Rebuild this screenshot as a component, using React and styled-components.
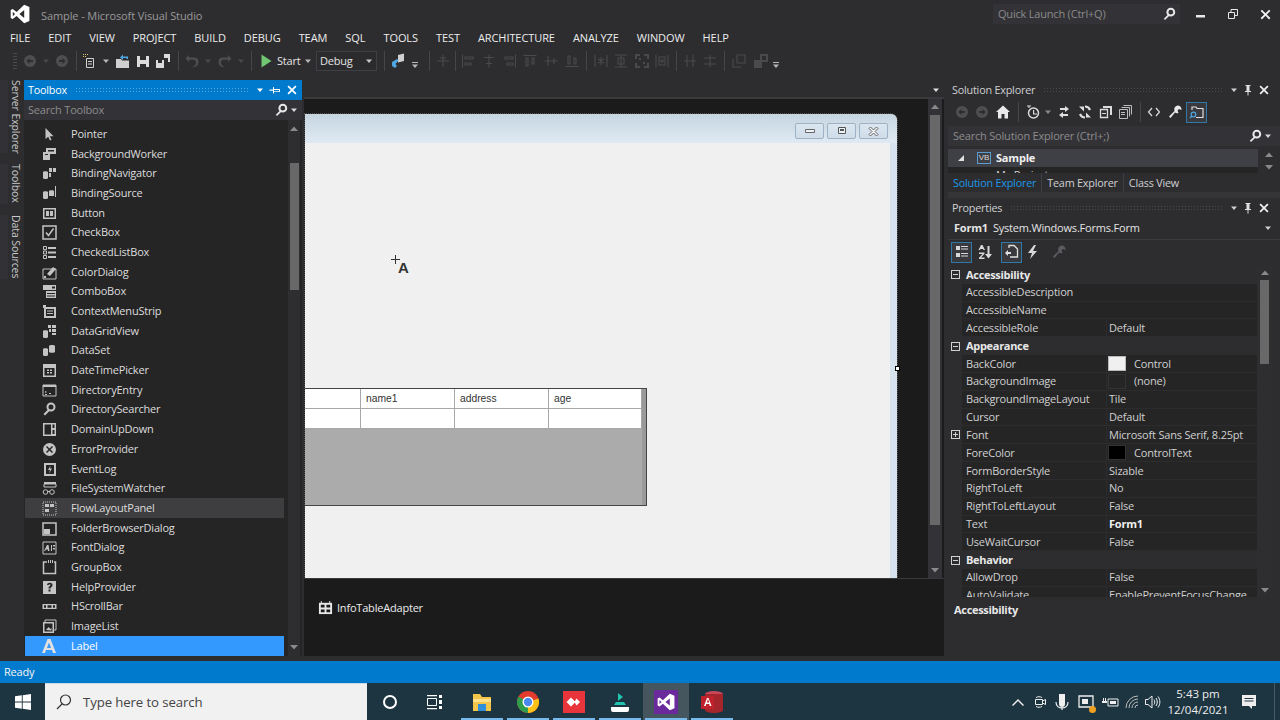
import React from 'react';
import styled, { createGlobalStyle } from 'styled-components';

const Global = createGlobalStyle`
  html, body { margin: 0; padding: 0; background: #2d2d30; }
  * { box-sizing: border-box; }
`;

const FONT = `"Open Sans", "Noto Sans", "Liberation Sans", sans-serif`;

const Page = styled.div`
  width: 1280px; height: 720px; overflow: hidden; display: flex; flex-direction: column;
  background: #2d2d30; color: #d8d8d8; font: 11px/16px ${FONT}; letter-spacing: -0.2px;
`;
const Svg = styled.svg`
  display: block; flex: none; color: ${p => p.$c || 'inherit'};
`;
const Ico = ({ s = 16, c, v = 16, children }) => (
  <Svg width={s} height={s} viewBox={`0 0 ${v} ${v}`} $c={c} fill="currentColor" stroke="none">{children}</Svg>
);
const Hole = p => <path fill="#252526" {...p} />;
const VSLogo = ({ s = 20, c = '#fff' }) => (
  <Ico s={s} v={20} c={c}><path fillRule="evenodd" d="M14.2.8 19.4 3v14l-5.2 2.2-7.6-7.3-3.9 3-2-1V6.1l2-1 3.9 3zM14.2 6 9.4 10l4.8 4zM2.8 7.8v4.4L5 10z" /></Ico>
);
const Caret = ({ c = '#d0d0d0', s = 8 }) => (
  <Ico s={s} v={8} c={c}><path d="M1 2.5h6L4 6z" /></Ico>
);
const Glass = ({ c = '#e8e8e8', s = 14 }) => (
  <Ico s={s} v={14} c={c}><circle cx="8.8" cy="5.2" r="3.4" fill="none" stroke="currentColor" strokeWidth="2" /><path d="M6.3 7.2 1.8 11.7l1.2 1.2L7.6 8.5z" /></Ico>
);
const Pin = () => (
  <Ico s={12} v={12} c="#e0e0e0"><path d="M3.500 1h5v1h-1v5h1.500v1H6.500v3.500h-1V8H3V7h1.500V2h-1z" /></Ico>
);
const PinSide = () => (
  <Ico s={12} v={12} c="#fff"><path d="M0.500 5.500H4V3h1v2h6v3H5v1.500H4V6.700H0.500zM5 6v1.200h5V6z" fillRule="evenodd" /></Ico>
);
const Close = ({ c = '#f0f0f0', s = 12 }) => (
  <Ico s={s} v={12} c={c}><path d="M1.500 2.700l1.200-1.200L6 4.800l3.300-3.300 1.200 1.200L7.200 6l3.300 3.300-1.200 1.200L6 7.200l-3.300 3.300-1.200-1.200L4.800 6z" /></Ico>
);

/* ---------- top chrome ---------- */
const TitleRow = styled.header`
  height: 28px; flex: none; display: flex; align-items: center; padding-left: 10px; color: #999;
`;
const TitleText = styled.span` margin-left: 11px; font-size: 11px; letter-spacing: -0.1px; flex: 1; padding-top: 4px; `;
const QuickLaunch = styled.div`
  width: 187px; height: 20px; background: #333337; color: #8a8a8a; padding: 0 4px 0 5px;
  display: flex; justify-content: space-between; align-items: center;
`;
const WinButtons = styled.div`
  display: flex; align-items: center; width: 100px; padding-left: 15px; gap: 20px;
`;
const MenuBar = styled.nav`
  height: 20px; flex: none; display: flex; align-items: center; gap: 18px; padding-left: 10px;
  color: #ececec; font-size: 11px; letter-spacing: -0.08px;
`;
const ToolStrip = styled.div`
  height: 26px; flex: none; display: flex; align-items: center; padding-left: 10px; color: #d8d8d8;
`;
const Tool = styled.span`
  width: ${p => p.$w}px; height: 20px; flex: none; display: flex; align-items: center; justify-content: center;
  ${p => p.$low ? 'padding-top: 8px;' : ''}
`;
const ToolSep = styled.span`
  width: ${p => p.$w || 8}px; height: 20px; flex: none; display: flex; justify-content: center;
  &::before { content: ''; width: 1px; background: #46464a; }
`;
const ToolText = styled.span` width: ${p => p.$w}px; flex: none; color: #e4e4e4; padding-left: 1px; `;
const Combo = styled.div`
  width: 61px; height: 20px; flex: none; border: 1px solid #3f3f46; display: flex; align-items: center;
  justify-content: space-between; padding: 0 3px 0 3px; color: #e4e4e4; background: #2b2b2e;
`;
const Grip = styled.span`
  width: 4px; height: 18px; margin: 0 3px;
  background-image: radial-gradient(#4a4a4d 0.7px, transparent 0.8px); background-size: 2px 3px;
`;

/* toolbar glyphs */
const dim = '#4e4e51';
const circleArrow = flip => (
  <Ico c={dim}><circle cx="8" cy="8" r="6" /><path fill="#2d2d30" d={flip ? 'M5 7h3.500V5L11.500 8l-3 3V9H5z' : 'M11 7H7.500V5L4.500 8l3 3V9H11z'} /></Ico>
);
const Ln = ({ d, c = '#4a4a4d' }) => (
  <Ico c={c}><path d={d} fill="none" stroke="currentColor" strokeWidth="1.100" /></Ico>
);
const AnyIco = {
  newProj: <Ico c="#d0d0d0"><path d="M4.500 5.500h7v9h-7z" fill="none" stroke="currentColor" strokeWidth="1" /><path d="M6 8h4v1H6zM6 10.500h4v1H6z" /><path d="M1 1h1v1H1zM3 1h1v1H3zM1 3h1v1H1zM3 3h1v1H3zM5 1h1v1H5z" fill="#d6c26a" /></Ico>,
  open: <Ico c="#d0d0d0"><path d="M1 6h5l1 1.500h7V15H1z" /><path d="M5 4.500 8 1.500v2h5v2.500h-1.500V5H8v2z" fill="#4fa6e0" /></Ico>,
  save: <Ico c="#dcdcdc"><path fillRule="evenodd" d="M2 3h12v11H2zM5 3v4h6V3zM5 11h6v3H5z" /></Ico>,
  saveAll: <Ico c="#dcdcdc"><path fillRule="evenodd" d="M7 1h8v8h-2V5H9V1zM1 7h8v8H1zM3 7v3h4V7z" /></Ico>,
  undo: <Ico c={dim}><path d="M5 2 1.500 5.500 5 9V6.700h4.500c2 0 2.500 1.500 2.500 3 0 2-1.500 3-3.500 4.300 4 0 6-2 6-5 0-3.500-2-4.500-4.500-4.500H5z" /></Ico>,
  redo: <Ico c={dim}><path d="M11 2l3.500 3.500L11 9V6.700H6.500c-2 0-2.500 1.500-2.500 3 0 2 1.500 3 3.500 4.300-4 0-6-2-6-5 0-3.500 2-4.500 4.500-4.500H11z" /></Ico>,
  play: <Ico s={16} c="#71c671"><path d="M3.500 1.500 13.500 8l-10 6.500z" /></Ico>,
  attach: <Ico c="#d0d0d0"><path d="M8 2l6-1.500V8L8 9.500z" /><path d="M2 9l5-3 1.500 1.500-3 3.500L7 13l-2 2-3-2z" fill="#4fa6e0" /></Ico>,
  low: <Ico s={8} v={8} c="#b8b8b8"><path d="M1 1h6v1H1zM1 3.500h6L4 7z" /></Ico>,
  plus: <Ln d="M8 2v12M2 8h12M5 5h6" />,
  a1: <Ln d="M2.500 1.500v13M5 4h8v2H5zM5 10h6v2H5z" />,
  a2: <Ln d="M8 1.500v13M3 4.500h10M5 10.500h6" />,
  a3: <Ln d="M13.500 1.500v13M3 4h8v2H3zM5 10h6v2H5z" />,
  a4: <Ln d="M1.500 2.500h13M4 5v8h2V5zM10 5v6h2V5z" />,
  a5: <Ln d="M1.500 8h13M5 3v10M11 5v6" />,
  a6: <Ln d="M1.500 13.500h13M4 3v8h2V3zM10 5v6h2V5z" />,
  b1: <Ln d="M2 2v12M14 2v12M8 4v8M5 6l6 4M11 6l-6 4" />,
  b2: <Ln d="M2 2h12M2 14h12M8 2v12M5 5h6v6H5z" />,
  b3: <Ico c="#4a4a4d"><path d="M1 1h5v2H3v3H1zM10 1h5v5h-2V3h-3zM1 10h2v3h3v2H1zM13 10h2v5h-5v-2h3zM5 5l2 0v2H5zM9 9h2v2H9z" /></Ico>,
  b4: <Ln d="M2 2v12M14 2v12M5 4h6v8H5zM7 7h2v2H7z" />,
  c1: <Ln d="M5 2v12M11 2v12M2 8h12" />,
  c2: <Ln d="M2 5h12M2 11h12M8 2v12" />,
  d1: <Ln d="M6 2h8v8H6zM2 6v8h8" />,
  d2: <Ico c="#4a4a4d"><path d="M7 1h8v8H7zM1 7h8v8H1z" /><path fill="#2d2d30" d="M9 3h4v4H9z" /></Ico>,
  tDim: <Caret c="#4a4a4d" />,
  t: <Caret c="#b8b8b8" />,
};
const strip = [
  ['g'], [20, circleArrow(false)], [12, AnyIco.tDim], [20, circleArrow(true)], ['s', 8],
  [20, AnyIco.newProj], [12, AnyIco.t], [22, AnyIco.open], [18, AnyIco.save], [22, AnyIco.saveAll], ['s', 8],
  [20, AnyIco.undo], [12, AnyIco.tDim], [22, AnyIco.redo], [10, AnyIco.tDim], ['s', 10],
  [20, AnyIco.play], ['x', 24, 'Start'], [16, AnyIco.t], ['c'], ['s', 14],
  [14, AnyIco.attach], [20, AnyIco.low, true], ['s', 8], [20, AnyIco.plus], ['s', 4],
  [21, AnyIco.a1], [22, AnyIco.a2], [20, AnyIco.a3], [20, AnyIco.a4], [22, AnyIco.a5], [20, AnyIco.a6], ['s', 8],
  [21, AnyIco.b1], [20, AnyIco.b2], [21, AnyIco.b3], [20, AnyIco.b4], ['s', 8],
  [20, AnyIco.c1], [20, AnyIco.c2], ['s', 8],
  [22, AnyIco.d1], [21, AnyIco.d2], [10, AnyIco.low, true],
];

/* ---------- main ---------- */
const Main = styled.main`
  height: 587px; flex: none; display: flex; padding: 6px 0 5px;
`;
const SideTabs = styled.aside`
  width: 24px; flex: none; display: flex; flex-direction: column; gap: 11px;
`;
const SideTab = styled.div`
  writing-mode: vertical-rl; height: ${p => p.$h}px; display: flex; align-items: center; font-size: 10.5px;
  letter-spacing: -0.1px; line-height: 14px; width: 23px; color: #c8c8c8; white-space: nowrap;
  border-left: 8px solid #323236;
`;
const ToolboxPane = styled.section`
  width: 278px; flex: none; display: flex; flex-direction: column; background: #252526; margin-right: 2px;
`;
const PaneHead = styled.div`
  height: 20px; flex: none; display: flex; align-items: center; gap: 6px; padding: 0 ${p => p.$r}px 1px ${p => p.$l}px;
  font-size: 10.8px; letter-spacing: -0.2px;
  background: ${p => p.$on ? '#007acc' : 'transparent'}; color: ${p => p.$on ? '#fff' : '#d0d0d0'};
`;
const Dots = styled.span`
  flex: 1; height: 5px; margin: 0 2px;
  background-image: radial-gradient(${p => p.$on ? '#59a8dc' : '#4a4a4d'} 0.6px, transparent 0.7px);
  background-size: 3px 3px;
`;
const HeadBtns = styled.span` display: flex; align-items: center; gap: ${p => p.$g}px; `;
const SearchBox = styled.div`
  height: 20px; flex: none; background: #333337; color: #8c8c8c; display: flex; align-items: center;
  justify-content: space-between; padding: 0 ${p => p.$r || 4}px 1px ${p => p.$l || 4}px;
`;
const SearchEnd = styled.span` display: flex; align-items: center; gap: 2px; `;
const ToolList = styled.div`
  flex: 1; min-height: 0; display: flex;
`;
const ToolItems = styled.ul`
  flex: none; width: 259px; margin: 4px 4px 0 1px; padding: 0; list-style: none;
`;
const ToolRow = styled.li`
  height: 19.69px; display: flex; align-items: center; padding-left: 16px; gap: 14px; color: ${p => p.$sel ? '#fff' : '#dcdcdc'};
  background: ${p => p.$sel ? '#3399ff' : p.$hot ? '#3e3e40' : 'transparent'};
`;
const Scroll = styled.div`
  width: ${p => p.$w}px; flex: none; display: flex; flex-direction: column; align-items: center;
  margin-right: ${p => p.$mr || 0}px; background: ${p => p.$bg || '#2e2e30'};
`;
const ScrollEnd = styled.span`
  height: ${p => p.$h || 16}px; flex: none; display: flex; align-items: center; justify-content: center;
`;
const Thumb = styled.span`
  width: ${p => p.$w || 9}px; height: ${p => p.$h}px; margin-top: ${p => p.$top || 0}px; flex: none; background: #686868;
`;
const Spring = styled.span` flex: 1; `;
const Up = ({ c = '#8a8a8a' }) => <Ico s={10} v={10} c={c}><path d="M1 7h8L5 2.500z" /></Ico>;
const Down = ({ c = '#8a8a8a' }) => <Ico s={10} v={10} c={c}><path d="M1 3h8L5 7.500z" /></Ico>;

/* toolbox glyphs */
const tb = {
  Pointer: <path d="M4.500 2v11l2.700-2.300L9 14.500l1.500-.7-1.700-3.600H12.500z" />,
  BackgroundWorker: <><path d="M5 2h10v6H9v6H2V6h3z" /><Hole d="M7 4h6v1.500H7zM4 8h3v1H4z" /></>,
  BindingNavigator: <><path d="M2 7c0-1 5-1 5 0v6c0 1.300-5 1.300-5 0z" /><path d="M8 3h3v4H8zM12 3h3v4h-3zM8 8h2v4H8z" /></>,
  BindingSource: <><path d="M2 7c0-1 5-1 5 0v6c0 1.300-5 1.300-5 0z" /><path d="M8 6c0-1 5-1 5 0v5H8zM14 1h1v11h-1z" /></>,
  Button: <><path d="M2 3h13v11H2z" /><path fill="#252526" d="M3.500 4.500h10v8h-10z" /><path d="M5 6h3v5H5zM9 6h3v5H9z" /></>,
  CheckBox: <><path d="M2 2h13v13H2z" fill="none" stroke="currentColor" strokeWidth="1.500" /><path d="M5 8.500 7.500 11.500 12.500 4.500" fill="none" stroke="currentColor" strokeWidth="1.500" /></>,
  CheckedListBox: <><path fill="none" stroke="currentColor" d="M2.500 2.500h3v3h-3zM2.500 7h3v3h-3zM2.500 11.500h3v3h-3z" /><path d="M7 3h8v2H7zM7 7.500h8v2H7zM7 12h8v2H7z" /></>,
  ColorDialog: <><path d="M2 5h13v10H2z" fill="none" stroke="currentColor" /><path d="M6 10l6-7 3 2-6 7zM3 12h2v2H3z" /></>,
  ComboBox: <><path d="M2 2h13v5H2zM5 8h10v7H5z" /><Hole d="M6 10h8v1H6zM6 12.500h8v1H6zM11 3.500h3v2h-3z" /></>,
  ContextMenuStrip: <><path d="M3 4h12v11H3z" /><Hole d="M5 6h8v7H5z" /><path d="M6 7.500h6v1H6zM6 10h6v1H6zM2 2h3v3H2z" /></>,
  DataGridView: <><path d="M2 8c0-1 5-1 5 0v6c0 1.300-5 1.300-5 0z" /><path d="M7 2h3v3H7zM11 2h4v3h-4zM8 6h2v3H8zM11 6h4v3h-4zM11 10h4v2h-4z" /></>,
  DataSet: <><path d="M2 7c0-1 5-1 5 0v6c0 1.300-5 1.300-5 0z" /><path d="M8 4c0-1.500 6-1.500 6 0v6c0 1-6 1-6 0z" /></>,
  DateTimePicker: <><path d="M2 2h13v13H2z" /><Hole d="M3.500 6h10v7.500h-10z" /><path d="M6 7.500h2v1.500H6zM9 7.500h2v1.500H9zM6 10h2v1.500H6zM9 10h2v1.500H9z" /></>,
  DirectoryEntry: <><path d="M2 3h13v11H2z" fill="none" stroke="currentColor" /><path d="M2 3h13v2H2zM4 9l2 1-2 1zM8 11h2v1H8zM4 12h2v1H4z" /></>,
  DirectorySearcher: <><circle cx="10" cy="6" r="3.500" fill="none" stroke="currentColor" strokeWidth="2" /><path d="M7.500 8 2.500 13l1.500 1.500 5-5z" /></>,
  DomainUpDown: <><path d="M2 2h13v13H2z" /><Hole d="M3.500 3.500h6.500v10H3.500zM11.500 3.500h2v3.500h-2zM11.500 9h2v4h-2z" /></>,
  ErrorProvider: <><circle cx="8.500" cy="8.500" r="6.500" /><path d="M6 5l2.500 2.500L11 5l1 1-2.500 2.500L12 11l-1 1-2.500-2.500L6 12l-1-1 2.500-2.500L5 6z" fill="#252526" /></>,
  EventLog: <><path d="M3 2h12v13H3z" /><Hole d="M5 4h8v9H5z" /><path d="M9.500 4.500 7 9h2l-1 3.500 3-5H9z" /></>,
  FileSystemWatcher: <><path d="M3 2h12v2H3z" /><path d="M3 4h12v3H3z" fill="none" stroke="currentColor" /><circle cx="4.500" cy="12" r="2.300" fill="none" stroke="currentColor" /><circle cx="11" cy="12" r="2.300" fill="none" stroke="currentColor" /><path d="M6.500 11h2.500v1H6.500z" /></>,
  FlowLayoutPanel: <><path d="M2 2h13v13H2z" fill="none" stroke="currentColor" strokeDasharray="1 1" /><path d="M4 4h4v3H4zM9 4h4v3H9zM4 9h4v3H4z" /></>,
  FolderBrowserDialog: <><path d="M2 3h13v12H2z" fill="none" stroke="currentColor" strokeWidth="1.500" /><path d="M3 9h6v5H3z" /></>,
  FontDialog: <><path d="M2 3h13v12H2z" fill="none" stroke="currentColor" /><path d="M3 12 6 6h1.500l1 6H7l-.2-1.500H5L4 12zM10 6h1v6h-1zM12 6h2v1.500h-2zM12 9h2v1.500h-2z" /></>,
  GroupBox: <><path d="M6 3H2.500v11.500h12V3H13" fill="none" stroke="currentColor" strokeWidth="1.500" /><path d="M7 1h1v3H7zM9 1h1v3H9zM11 1h1v3h-1z" /></>,
  HelpProvider: <><path d="M2 2h13v13H2z" /><path fill="#252526" d="M6 6c0-3 5.500-3 5.500 0 0 2-2 2-2 3.500h-2c0-2.500 2-2.500 2-3.500s-1.700-1-1.700 0zM7.500 10.500h2v2h-2z" /></>,
  HScrollBar: <><path d="M1.500 6h14v5h-14z" /><Hole d="M3 7.200h2v2.600H3zM6.500 7.200h4v2.600h-4zM12 7.200h2v2.600h-2z" /></>,
  ImageList: <><path d="M4 2h11v10H4z" fill="none" stroke="currentColor" /><path d="M2 4h11v11H2z" /><Hole d="M3.500 5.500h8v8h-8z" /><path d="M5 12l2.500-3 2 2 1-1v2.500z" /></>,
  Label: <path d="M6.500 1h3L15 15h-3l-1-3H5l-1 3H1zM8 4.500 6 10h4z" fillRule="evenodd" />,
};
const tools = Object.keys(tb);

/* ---------- document ---------- */
const Doc = styled.section`
  width: 640px; flex: none; display: flex; flex-direction: column; margin-right: 4px;
`;
const DocTabs = styled.div`
  height: 17px; flex: none; display: flex; justify-content: flex-end; align-items: center; padding: 3px 4px 0 0;
`;
const DocRule = styled.div` height: 2px; flex: none; background: #3a3a3d; `;
const Designer = styled.div`
  height: 479px; flex: none; display: flex; background: #1b1b1c;
`;
const Canvas = styled.div`
  flex: 1; min-width: 0; padding: 15px 0 0 1px; overflow: hidden; position: relative;
`;
const WinForm = styled.div`
  width: 592px; height: 464px; position: relative; display: flex; flex-direction: column; background: #f0f0f0;
  border-right: 7px solid #d6e3ee; border-top-right-radius: 6px;
  outline: 1px dotted #555;
`;
const FormTitle = styled.div`
  height: 29px; flex: none; margin-right: -7px; border-top-right-radius: 6px; display: flex; justify-content: flex-end;
  gap: 3px; padding: 9px 9px 0 0; background: linear-gradient(#c5d5e0, #dfe9f3);
`;
const CapBtn = styled.span`
  width: 29px; height: 16px; border: 1px solid #9fb2c4; border-radius: 2px; display: flex; align-items: center; justify-content: center;
  background: linear-gradient(#dbe6ef, #cfdde9);
`;
const Handle = styled.span`
  position: absolute; right: -10px; top: 252px; width: 5px; height: 5px; background: #fff; border: 1px solid #000;
`;
const DropCursor = styled.span`
  position: absolute; left: 86px; top: 140px; width: 22px; height: 24px; color: #333;
  font: bold 15px/16px "Liberation Sans", sans-serif; letter-spacing: 0;
`;
const CursorA = styled.span` position: absolute; left: 7px; top: 6px; `;
const CursorCross = styled.span`
  position: absolute; left: 0; top: 1px; width: 9px; height: 9px;
  background: linear-gradient(#333,#333) 4px 0/1px 9px no-repeat, linear-gradient(#333,#333) 0 4px/9px 1px no-repeat;
`;
const GridCtl = styled.div`
  position: absolute; left: 0; top: 274px; width: 342px; height: 118px; background: #ababab;
  border: 1px solid #454545; border-left: 0; display: flex; flex-direction: column; padding-right: 4px;
  box-shadow: inset -4px 0 0 #9a9a9a;
`;
const GridLine = styled.div`
  display: grid; grid-template-columns: 56px 94px 94px 93px; height: ${p => p.$h}px; flex: none; background: #fff;
  border-bottom: 1px solid #a8a8a8;
`;
const GridCell = styled.div`
  border-right: 1px solid #a8a8a8; padding: 2px 0 0 5px; color: #333; font: 10.3px/16px "Liberation Sans", sans-serif; letter-spacing: 0;
`;
const Tray = styled.div`
  flex: 1; background: #1b1b1c; display: flex; align-items: center; gap: 4px; padding: 0 0 20px 14px; color: #ececec;
  border-top: 1px solid #3a3a3d;
`;

/* ---------- right ---------- */
const RightCol = styled.aside`
  width: 332px; flex: none; display: flex; flex-direction: column;
`;
const Icons = styled.div`
  height: ${p => p.$h}px; flex: none; display: flex; align-items: center; padding: 0 0 2px ${p => p.$l}px; color: #d8d8d8;
`;
const Boxed = styled.span`
  width: ${p => p.$w}px; height: 21px; flex: none; display: flex; align-items: center; justify-content: center;
  ${p => p.$on ? 'border: 1px solid #2f78a8; background: #3a3a3e;' : ''}
`;
const TreeWrap = styled.div`
  margin-top: 3px; height: 24px; flex: none; display: flex; background: #252526; overflow: hidden;
`;
const TreeBody = styled.div` flex: 1; min-width: 0; `;
const TreeRow = styled.div`
  height: 18px; display: flex; align-items: center; background: #3f3f46; padding-left: 9px; font-weight: 700; color: #f0f0f0;
`;
const Clip = styled.div` height: 6px; overflow: hidden; padding-left: 48px; color: #cfcfcf; `;
const VB = styled.span`
  width: 14px; height: 12px; border: 1px solid #5a9bd0; color: #d8d8d8; font: 8px/10px "Liberation Sans", sans-serif; text-align: center;
  margin: 0 5px 0 12px; letter-spacing: 0;
`;
const Tabs = styled.div`
  height: 25px; flex: none; display: flex; padding-left: 5px; border-bottom: 6px solid #353538; background: #2d2d30;
`;
const TabItem = styled.span`
  display: flex; align-items: center; height: 19px; color: ${p => p.$on ? '#1e97e6' : '#d0d0d0'}; padding-right: 5px; margin-right: 5px;
  border-right: ${p => p.$last ? '0' : '1px solid #3f3f46'}; white-space: nowrap; font-size: 10.8px; letter-spacing: -0.2px;
`;
const ObjRow = styled.div`
  height: 22px; flex: none; display: flex; align-items: center; padding: 0 8px 2px 6px; color: #e4e4e4; border-bottom: 1px solid #3a3a3d;
`;
const ObjName = styled.b` margin-right: 5px; font-weight: 700; `;
const Grow = styled.span` flex: 1; `;
const PropArea = styled.div`
  height: 331px; flex: none; display: flex; overflow: hidden;
`;
const PropList = styled.div`
  width: 309px; flex: none; overflow: hidden;
`;
const Cat = styled.div`
  height: 17.84px; display: flex; align-items: center; font-weight: 700; color: #e8e8e8; letter-spacing: -0.3px;
`;
const Prop = styled.div`
  height: 17.84px; display: flex; align-items: center; color: #d0d0d0; border-bottom: 1px solid #2c2c2e; background: #252526;
  margin-left: 14px; position: relative;
`;
const Expander = styled.span`
  width: 9px; height: 9px; flex: none; border: 1px solid #d0d0d0; margin: 0 6px 0 3px;
  background: linear-gradient(#d0d0d0,#d0d0d0) center/5px 1px no-repeat
    ${p => p.$plus ? ', linear-gradient(#d0d0d0,#d0d0d0) center/1px 5px no-repeat' : ''};
`;
const PlusAbs = styled(Expander)` position: absolute; left: -14px; margin: 0 0 0 3px; `;
const PName = styled.span` width: 144px; flex: none; padding-left: 4px; white-space: nowrap; overflow: hidden; `;
const PVal = styled.span`
  flex: 1; min-width: 0; white-space: nowrap; overflow: hidden; border-left: 1px solid #2c2c2e; padding-left: 2px;
  font-weight: ${p => p.$b ? 700 : 400}; display: flex; align-items: center; color: ${p => p.$b ? '#f0f0f0' : '#d0d0d0'};
`;
const Swatch = styled.span`
  width: 18px; height: 15px; flex: none; background: ${p => p.$c}; margin: 0 8px 0 -1px; border: ${p => p.$c === '#f0f0f0' ? '1px solid #bbb' : '1px solid #333'};
`;
const Desc = styled.div`
  height: 59px; flex: none; padding: 5px 6px; font-weight: 700; color: #e8e8e8; letter-spacing: -0.3px;
`;

const cats = [
  ['c', 'Accessibility'], ['AccessibleDescription', ''], ['AccessibleName', ''], ['AccessibleRole', 'Default'],
  ['c', 'Appearance'], ['BackColor', 'Control', '#f0f0f0'], ['BackgroundImage', '(none)', '#252526'],
  ['BackgroundImageLayout', 'Tile'], ['Cursor', 'Default'], ['+', 'Font', 'Microsoft Sans Serif, 8.25pt'],
  ['ForeColor', 'ControlText', '#000'], ['FormBorderStyle', 'Sizable'], ['RightToLeft', 'No'],
  ['RightToLeftLayout', 'False'], ['b', 'Text', 'Form1'], ['UseWaitCursor', 'False'],
  ['c', 'Behavior'], ['AllowDrop', 'False'], ['AutoValidate', 'EnablePreventFocusChange'],
];

const wrench = c => <Ico c={c}><path d="M10.500 1.500a4 4 0 0 1 4 4.500l-2.500-1-1.500 1.500 1 2.500a4 4 0 0 1-3.500-.5L3.500 14 2 12.500 7.500 7A4 4 0 0 1 10.500 1.500z" /></Ico>;
const seIcons = [
  [1, 'x', 4], [20, circleArrow(false)], [20, circleArrow(true)],
  [22, <Ico c="#e8e8e8"><path d="M8 1.500 15 8h-2v6.500H9.500V10h-3v4.500H3V8H1z" /></Ico>],
  ['s', 9],
  [20, <Ico c="#dcdcdc"><circle cx="8.500" cy="9" r="5" fill="none" stroke="currentColor" strokeWidth="1.500" /><path d="M8 6h1.200v3.500H12v1H8zM2 1.500h4v1H4.500V4h-1V2.500H2z" /></Ico>],
  [10, <Caret c="#8a8a8a" />],
  [22, <Ico c="#e0e0e0"><path d="M9 2l4 3-4 3V6H4V4h5zM7 8v2h5v2H7v2L3 11z" /></Ico>],
  [20, <Ico c="#e0e0e0"><path d="M8 1.500a6.500 6.500 0 0 1 6 4l-2 1a4.500 4.500 0 0 0-4-3V1.500zM8 14.500a6.500 6.500 0 0 1-6-4l2-1a4.500 4.500 0 0 0 4 3zM2 2.500h5v5zM14 13.500H9v-5z" /></Ico>],
  [21, <Ico c="#dcdcdc"><path d="M5 2h9v9h-2V4H5z" /><path fill="none" stroke="currentColor" strokeWidth="1.300" d="M2.500 5.500h7v8h-7z" /><path d="M4 9h4v1H4z" /></Ico>],
  [20, <Ico c="#bcbcbc"><path fill="none" stroke="currentColor" d="M5.500 1.500h8v9M3.500 3.500h8v9M1.500 5.500h8v9h-8z" /><path d="M3 8h4v1H3zM3 10h4v1H3z" /></Ico>],
  ['s', 8],
  [20, <Ico c="#dcdcdc"><path d="M6 4 2.500 8 6 12M10 4l3.500 4L10 12" fill="none" stroke="currentColor" strokeWidth="1.200" /></Ico>],
  [22, wrench('#e8e8e8')],
  ['b', 21, <Ico c="#e0e0e0"><path fill="none" stroke="currentColor" strokeWidth="1.200" d="M3 6V3h4l1 1.500h6v9H7" /><circle cx="4.500" cy="10.500" r="2.300" fill="none" stroke="#4fa6e0" strokeWidth="1.200" /><path d="M3 12 1 14" stroke="#4fa6e0" strokeWidth="1.400" /></Ico>],
];
const propIcons = [
  ['b', 21, <Ico c="#d8d8d8"><path d="M2 2h4v4H2zM2 9h4v4H2z" /><path d="M7 2h7v1H7zM7 4.500h7v1H7zM7 9h7v1H7zM7 11.500h7v1H7z" /></Ico>],
  [2, 'x', 2],
  [21, <Ico c="#d8d8d8"><path d="M1.500 6 4 1h1.500L8 6H6.500L6 5H3.500L3 6zM2 8.500h5.500v1.300L4 13.500h3.500V15H2v-1.300L5.500 10H2zM10.500 2h2v8H15l-3.500 4.500L8 10h2.500z" /></Ico>],
  [6, 'x', 6],
  ['b', 21, <Ico c="#e0e0e0"><path d="M5 4V1.500h5l3.500 3.500v8H6" fill="none" stroke="currentColor" strokeWidth="1.300" /><path d="M4 6 1 9l3 3v-2h3V8H4z" /></Ico>],
  [21, <Ico c="#d8d8d8"><path d="M9 1 3 9h4l-2 6 7-8H8l3-6z" /></Ico>],
  [5, 'x', 5],
  [21, wrench('#5c5c60')],
];
const renderIcons = list => list.map((it, i) => {
  if (it[1] === 'x') return <Tool key={i} $w={it[2]} />;
  if (it[0] === 's') return <ToolSep key={i} $w={it[1]} />;
  if (it[0] === 'b') return <Boxed key={i} $on $w={it[1]}>{it[2]}</Boxed>;
  return <Tool key={i} $w={it[0]}>{it[1]}</Tool>;
});

/* ---------- bottom ---------- */
const Status = styled.footer`
  height: 22px; flex: none; background: #007acc; color: #f4f4f4; padding: 3px 0 0 4px;
`;
const Taskbar = styled.div`
  height: 37px; flex: none; display: flex; align-items: center; background: #1d3540; color: #fff; letter-spacing: 0;
`;
const StartBtn = styled.span` width: 45px; height: 100%; display: flex; align-items: center; justify-content: center; flex: none; `;
const TaskSearch = styled.div`
  width: 322px; height: 100%; flex: none; background: #f1f1f1; color: #444; display: flex; align-items: center; gap: 10px;
  padding-left: 10px; font-size: 13.2px; letter-spacing: -0.1px; border-top: 1px solid #cfdbe0;
`;
const TaskIcon = styled.span`
  width: ${p => p.$w}px; margin-left: ${p => p.$ml || 0}px; height: 100%; flex: none; display: flex; align-items: center; justify-content: center; position: relative;
  background: ${p => p.$on ? '#46565e' : 'transparent'};
  ${p => p.$run ? `&::after { content: ''; position: absolute; left: 2px; right: 2px; bottom: 0; height: 2px; background: #76b9ed; }` : ''}
`;
const Tray2 = styled.div`
  flex: 1; display: flex; align-items: center; justify-content: flex-end; height: 100%; color: #eee;
`;
const TrayIcon = styled.span`
  width: ${p => p.$w}px; display: flex; justify-content: center; flex: none; position: relative;
`;
const Clock = styled.div`
  width: 68px; flex: none; text-align: center; font-size: 11.5px; line-height: 16px; color: #eee; white-space: nowrap;
`;
const OrangeDot = styled.span`
  position: absolute; right: 2px; bottom: -2px; width: 7px; height: 7px; border-radius: 50%; background: #f0a020;
`;
const Edge = styled.span` width: 6px; height: 100%; flex: none; margin-left: 8px; border-left: 1px solid #4a5a62; `;

const Chrome = () => (
  <Ico s={24} v={24}>
    <circle cx="12" cy="12" r="11" fill="#e33b2e" />
    <path d="M12 12 22.500 8.500A11 11 0 0 1 12 23z" fill="#fbc116" />
    <path d="M12 12 12 23A11 11 0 0 1 2.500 6.500z" fill="#2e9e4d" />
    <circle cx="12" cy="12" r="5.500" fill="#fff" /><circle cx="12" cy="12" r="4.200" fill="#4a8af0" />
  </Ico>
);

export default function App() {
  return (
    <Page>
      <Global />
      <TitleRow>
        <VSLogo />
        <TitleText>Sample - Microsoft Visual Studio</TitleText>
        <QuickLaunch>Quick Launch (Ctrl+Q)<Glass /></QuickLaunch>
        <WinButtons>
          <Ico s={12} v={12} c="#e8e8e8"><path d="M1 7h9v2.500H1z" /></Ico>
          <Ico s={12} v={12} c="#e8e8e8"><path fill="none" stroke="currentColor" d="M1.500 4.500h6v6h-6zM4 4V1.500h6.500v6H8" /></Ico>
          <Close s={13} />
        </WinButtons>
      </TitleRow>
      <MenuBar>
        {['FILE','EDIT','VIEW','PROJECT','BUILD','DEBUG','TEAM','SQL','TOOLS','TEST','ARCHITECTURE','ANALYZE','WINDOW','HELP'].map(m => <span key={m}>{m}</span>)}
      </MenuBar>
      <ToolStrip>
        {strip.map((it, i) => {
          if (it[0] === 'g') return <Tool key={i} $w={10}><Grip /></Tool>;
          if (it[0] === 's') return <ToolSep key={i} $w={it[1]} />;
          if (it[0] === 'x') return <ToolText key={i} $w={it[1]}>{it[2]}</ToolText>;
          if (it[0] === 'c') return <Combo key={i}>Debug<Caret c="#c8c8c8" /></Combo>;
          return <Tool key={i} $w={it[0]} $low={it[2]}>{it[1]}</Tool>;
        })}
      </ToolStrip>

      <Main>
        <SideTabs>
          <SideTab $h={73}>Server Explorer</SideTab>
          <SideTab $h={40}>Toolbox</SideTab>
          <SideTab $h={64}>Data Sources</SideTab>
        </SideTabs>
        <ToolboxPane>
          <PaneHead $on $l={4} $r={4}>
            Toolbox<Dots $on />
            <HeadBtns $g={5}><Caret c="#fff" /><PinSide /><Close c="#fff" /></HeadBtns>
          </PaneHead>
          <SearchBox>
            Search Toolbox
            <SearchEnd><Glass /><Caret c="#d8d8d8" /></SearchEnd>
          </SearchBox>
          <ToolList>
            <ToolItems>
              {tools.map(t => (
                <ToolRow key={t} $hot={t === 'FlowLayoutPanel'} $sel={t === 'Label'}>
                  <Ico c={t === 'Label' ? '#e0e0e0' : '#c4c4c4'}>{tb[t]}</Ico>
                  {t}
                </ToolRow>
              ))}
            </ToolItems>
            <Scroll $w={12}>
              <ScrollEnd $h={18}><Up /></ScrollEnd>
              <Thumb $top={25} $h={127} />
              <Spring />
              <ScrollEnd $h={18}><Down /></ScrollEnd>
            </Scroll>
          </ToolList>
        </ToolboxPane>

        <Doc>
          <DocTabs><Caret c="#e0e0e0" /></DocTabs>
          <DocRule />
          <Designer>
            <Canvas>
              <WinForm>
                <FormTitle>
                  <CapBtn><Ico s={10} v={10} c="#555"><path fill="#eef3f7" stroke="#666" d="M.5 3.5h9v3h-9z" /></Ico></CapBtn>
                  <CapBtn><Ico s={10} v={10} c="#555"><path fill="#eef3f7" stroke="#555" d="M1.5 1.5h7v6h-7z" /><path fill="#555" d="M3 3h4v2H3z" /></Ico></CapBtn>
                  <CapBtn><Ico s={11} v={11} c="#666"><path fill="#f4f6f8" stroke="#666" strokeWidth="1" d="M1 2.500 2.500 1 5.500 4 8.500 1 10 2.500 7 5.500 10 8.500 8.500 10 5.500 7 2.500 10 1 8.500 4 5.500z" /></Ico></CapBtn>
                </FormTitle>
                <Handle />
                <DropCursor><CursorCross /><CursorA>A</CursorA></DropCursor>
                <GridCtl>
                  <GridLine $h={20}>
                    <GridCell /><GridCell>name1</GridCell><GridCell>address</GridCell><GridCell>age</GridCell>
                  </GridLine>
                  <GridLine $h={20}>
                    <GridCell /><GridCell /><GridCell /><GridCell />
                  </GridLine>
                </GridCtl>
              </WinForm>
            </Canvas>
            <Scroll $w={14} $mr={2} $bg="#333337">
              <ScrollEnd $h={16}><Up /></ScrollEnd>
              <Thumb $h={410} $w={10} />
              <Spring />
              <ScrollEnd $h={16}><Down /></ScrollEnd>
            </Scroll>
          </Designer>
          <Tray>
            <Ico s={15} c="#e8e8e8"><path d="M1 3h14v12H1z" /><path fill="#1b1b1c" d="M3 5h4v3H3zM9 5h4v3H9zM3 10h4v3H3zM9 10h4v3H9z" /><path d="M3 1h1v3H3zM12 1h1v3h-1z" /></Ico>
            InfoTableAdapter
          </Tray>
        </Doc>

        <RightCol>
          <PaneHead $l={4} $r={10}>
            Solution Explorer<Dots />
            <HeadBtns $g={4}><Caret /><Pin /><Close /></HeadBtns>
          </PaneHead>
          <Icons $h={26} $l={0}>{renderIcons(seIcons)}</Icons>
          <SearchBox $l={5} $r={8}>
            Search Solution Explorer (Ctrl+;)
            <SearchEnd><Glass /><Caret c="#d8d8d8" /></SearchEnd>
          </SearchBox>
          <TreeWrap>
            <TreeBody>
              <TreeRow>
                <Ico s={8} v={8} c="#e0e0e0"><path d="M7 1v6H1z" /></Ico>
                <VB>VB</VB>Sample
              </TreeRow>
              <Clip>My Project</Clip>
            </TreeBody>
            <Scroll $w={22} $bg="#2d2d30">
              <ScrollEnd $h={12}><Up /></ScrollEnd>
              <ScrollEnd $h={12}><Down /></ScrollEnd>
            </Scroll>
          </TreeWrap>
          <Tabs>
            <TabItem $on>Solution Explorer</TabItem>
            <TabItem>Team Explorer</TabItem>
            <TabItem $last>Class View</TabItem>
          </Tabs>
          <PaneHead $l={4} $r={10}>
            Properties<Dots />
            <HeadBtns $g={4}><Caret /><Pin /><Close /></HeadBtns>
          </PaneHead>
          <ObjRow><ObjName>Form1</ObjName>System.Windows.Forms.Form<Grow /><Caret /></ObjRow>
          <Icons $h={26} $l={3}>{renderIcons(propIcons)}</Icons>
          <PropArea>
            <PropList>
              {cats.map(row => {
                if (row[0] === 'c') return <Cat key={row[1]}><Expander />{row[1]}</Cat>;
                if (row[0] === '+') return <Prop key={row[1]}><PlusAbs $plus /><PName>{row[1]}</PName><PVal>{row[2]}</PVal></Prop>;
                if (row[0] === 'b') return <Prop key={row[1]}><PName>{row[1]}</PName><PVal $b>{row[2]}</PVal></Prop>;
                return (
                  <Prop key={row[0]}>
                    <PName>{row[0]}</PName>
                    <PVal>{row[2] && <Swatch $c={row[2]} />}{row[1]}</PVal>
                  </Prop>
                );
              })}
            </PropList>
            <Scroll $w={15}>
              <ScrollEnd $h={14}><Up /></ScrollEnd>
              <Thumb $h={84} />
              <Spring />
              <ScrollEnd $h={14}><Down /></ScrollEnd>
            </Scroll>
          </PropArea>
          <Desc>Accessibility</Desc>
        </RightCol>
      </Main>

      <Status>Ready</Status>
      <Taskbar>
        <StartBtn>
          <Ico s={16} c="#fff"><path d="M0 2.300 6.800 1.300V7.500H0zM7.700 1.200 16 0V7.500H7.700zM0 8.500H6.800V14.700L0 13.700zM7.700 8.500H16V16L7.700 14.800z" /></Ico>
        </StartBtn>
        <TaskSearch>
          <Ico s={18} v={18} c="#333"><circle cx="10.500" cy="7" r="5" fill="none" stroke="currentColor" strokeWidth="1.200" /><path d="M7 11 2 16" stroke="currentColor" strokeWidth="1.300" /></Ico>
          Type here to search
        </TaskSearch>
        <TaskIcon $w={46}><Ico s={16} c="#fff"><circle cx="8" cy="8" r="6" fill="none" stroke="currentColor" strokeWidth="2" /></Ico></TaskIcon>
        <TaskIcon $w={44}><Ico s={18} v={18} c="#fff"><path fill="none" stroke="currentColor" d="M1.500 5.500h9v7h-9z" /><path d="M1 2h10v1.200H1zM1 15h10v1.200H1zM13 2h3v3h-3zM13 7h3v4h-3zM13 13h3v3h-3z" /></Ico></TaskIcon>
        <TaskIcon $w={46} $ml={2} $run><Ico s={24} v={24}><path d="M3 4h7l2 3h9v14H3z" fill="#f3c64a" /><path d="M3 9h18v3H3z" fill="#ffe08a" /><path d="M8 14h8v7H8z" fill="#2f8fd8" /></Ico></TaskIcon>
        <TaskIcon $w={46} $run><Chrome /></TaskIcon>
        <TaskIcon $w={46} $run><Ico s={22} v={22}><path d="M0 0h22v22H0z" fill="#e8353b" /><path d="M8 6.500l4.500 4.500L8 15.500 3.500 11zM13.500 7.500 17 11l-3.500 3.500-2-3.500z" fill="#fff" /></Ico></TaskIcon>
        <TaskIcon $w={46} $run><Ico s={24} v={24}><path d="M10 3 15 7l-5 4zM8 12h8l2 3H6z" fill="#20c5b0" /><path d="M3 17h18v3a2 2 0 0 1-2 2H5a2 2 0 0 1-2-2z" fill="#fff" /></Ico></TaskIcon>
        <TaskIcon $w={46} $on $run><Ico s={24} v={24}><path d="M0 0h24v24H0z" fill="#6a2a9c" /><g transform="translate(3 3) scale(.9)"><path fill="#fff" fillRule="evenodd" d="M14.2.8 19.4 3v14l-5.2 2.2-7.600-7.300-3.900 3-2-1V6.100l2-1 3.900 3zM14.200 6 9.400 10l4.800 4zM2.800 7.800v4.400L5 10z" /></g></Ico></TaskIcon>
        <TaskIcon $w={46} $run><Ico s={26} v={26}><ellipse cx="15" cy="5" rx="9" ry="3" fill="#c8485a" /><path d="M6 5h18v16c0 4-18 4-18 0z" fill="#a4262c" /><path d="M2 7h13v13H2z" fill="#c0222c" /><path d="M5 17l3-8h1.500l3 8h-1.700l-.6-2H7.300l-.6 2zM7.800 13.500h2.400L9 10z" fill="#fff" fillRule="evenodd" /></Ico></TaskIcon>
        <Tray2>
          <TrayIcon $w={22}><Ico s={16} c="#eee"><path d="M2 11 8 5l6 6-1 1-5-5-5 5z" /></Ico></TrayIcon>
          <TrayIcon $w={22}><Ico s={16} c="#eee"><path fill="none" stroke="currentColor" d="M3.500 5.500h7v5h-7zM10.500 7l3-1.500v5l-3-1.500M4 3.500c2-1 4-1 6 0M4 12.500c2 1 4 1 6 0" /></Ico></TrayIcon>
          <TrayIcon $w={22}><Ico s={18} v={18} c="#f0f0f0"><path d="M6 1h6v10a3 3 0 0 1-6 0z" /><path d="M3 9c0 8 12 8 12 0M9 14v3" fill="none" stroke="currentColor" strokeWidth="1.200" /></Ico></TrayIcon>
          <TrayIcon $w={25}><Ico s={18} v={18} c="#eee"><path fill="none" stroke="currentColor" strokeWidth="1.300" d="M2 3h14v11H2z" /><path d="M5 6h6v5H5z" /></Ico><OrangeDot /></TrayIcon>
          <TrayIcon $w={24}><Ico s={18} v={18} c="#eee"><path d="M7 6h10v7H7z" fill="none" stroke="currentColor" /><path d="M9 8h6v3H9zM1 8h5v2H1zM2 5h1v3H2zM4 5h1v3H4z" /></Ico></TrayIcon>
          <TrayIcon $w={20}><Ico s={16} c="#bbb"><path d="M2 14a12 12 0 0 1 12-12M5 14a9 9 0 0 1 9-9M8 14a6 6 0 0 1 6-6M11 14a3 3 0 0 1 3-3" fill="none" stroke="currentColor" strokeWidth="1" /></Ico></TrayIcon>
          <TrayIcon $w={22}><Ico s={18} v={18} c="#eee"><path d="M1.500 6.500H4L8 3v12l-4-3.500H1.500z" fill="none" stroke="currentColor" /><path d="M10 6.500c1 1.500 1 3.500 0 5M12 5c1.700 2.500 1.700 5.500 0 8M14 3.500c2.500 3.500 2.500 7.500 0 11" fill="none" stroke="currentColor" /></Ico></TrayIcon>
          <Clock>5:43 pm<br />12/04/2021</Clock>
          <TrayIcon $w={34}><Ico s={18} v={18} c="#eee"><path d="M2 2h14v11h-4v3l-3-3H2z" /><path d="M4.500 5h9v1h-9zM4.500 7.500h9v1h-9z" fill="#1d3540" /></Ico></TrayIcon>
          <Edge />
        </Tray2>
      </Taskbar>
    </Page>
  );
}
